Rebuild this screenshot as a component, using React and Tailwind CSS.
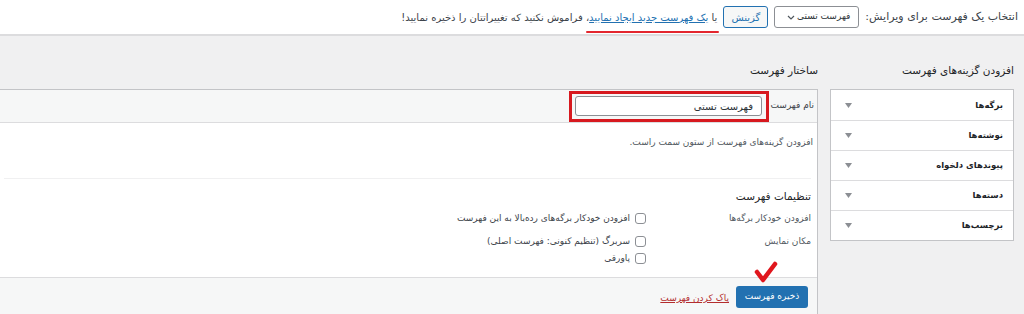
import React from 'react';

const items = ['برگه‌ها', 'نوشته‌ها', 'پیوندهای دلخواه', 'دسته‌ها', 'برچسب‌ها'];

const Arrow = () => (
  <svg width="7" height="5" viewBox="0 0 7 5" className="fill-[#8c8f94]">
    <path d="M0 0 L7 0 L3.5 5 Z" />
  </svg>
);

const Checkbox = () => (
  <span className="inline-block w-[11px] h-[11px] border border-[#8c8f94] rounded-[3px] bg-white shrink-0" />
);

const App = () => {
  return (
    <div
      dir="rtl"
      className="w-[1024px] h-[314px] overflow-hidden bg-[#f0f0f1] text-[#3c434a] text-[10px]"
      style={{ fontFamily: '"DejaVu Sans", "Liberation Sans", sans-serif' }}
    >
      {/* Top bar */}
      <div className="h-[36px] bg-white border-b-2 border-[#dcdcde] flex items-center pr-[6px] gap-[4px] whitespace-nowrap">
        <span className="text-[11px]">انتخاب یک فهرست برای ویرایش:</span>
        <div className="w-[85px] h-[22px] shrink-0 border border-[#8c8f94] rounded-[3px] flex items-center pr-[8px] pl-[12px] mr-[2px] overflow-hidden">
          <span className="flex-1 text-[9px] text-[#2c3338]">فهرست تستی</span>
          <svg className="shrink-0" width="8" height="5" viewBox="0 0 8 5" fill="none" stroke="#50575e" strokeWidth="1.2">
            <path d="M1 1 L4 4 L7 1" />
          </svg>
        </div>
        <button className="w-[45px] h-[22px] shrink-0 border border-[#2271b1] text-[#2271b1] bg-[#f6f7f7] rounded-[3px] mr-[2px]">
          گزینش
        </button>
        <span className="mr-[2px]">
          <span className="relative">
            یا{' '}
            <span className="text-[#2271b1] underline">یک فهرست جدید ایجاد نمایید</span>
            <span className="absolute left-[-3px] right-[-2px] top-[19px] h-[2px] bg-[#e3262e] rounded" />
          </span>
          ، فراموش نکنید که تغییراتتان را ذخیره نمایید!
        </span>
      </div>

      <div className="flex pr-[10px] pt-[26px] gap-[12px]">
        {/* Right column */}
        <div className="w-[184px] shrink-0">
          <h2 className="h-[16px] leading-[16px] text-[10.5px] text-[#1d2327] mb-[11px]">
            افزودن گزینه‌های فهرست
          </h2>
          <div className="bg-white border border-[#c3c4c7]">
            {items.map((item, i) => (
              <div
                key={i}
                className={`h-[30px] flex items-center justify-between pr-[10px] pl-[14px] ${
                  i > 0 ? 'border-t border-[#dcdcde]' : ''
                }`}
              >
                <span className="text-[8.5px] font-bold text-[#1d2327]">{item}</span>
                <Arrow />
              </div>
            ))}
          </div>
        </div>

        {/* Left column */}
        <div className="flex-1">
          <h2 className="h-[16px] leading-[16px] text-[10.5px] text-[#1d2327] mb-[11px]">
            ساختار فهرست
          </h2>
          <div className="border border-l-0 border-[#c3c4c7] bg-white text-[9px]">
            {/* Header */}
            <div className="h-[33px] bg-[#f6f7f7] border-b border-[#dcdcde] flex items-center pr-[3px] gap-[2px]">
              <span>نام فهرست</span>
              <div className="border-[3px] border-[#d7191f] w-[200px] h-[31px] flex items-center justify-center">
                <div className="w-[187px] h-[20px] border border-[#8c8f94] rounded-[3px] bg-white flex items-center pr-[8px] text-[10px] text-[#2c3338]">
                  فهرست تستی
                </div>
              </div>
            </div>

            {/* Body */}
            <div className="pt-[12px] pr-[4px] h-[55px] text-[#50575e]">
              <p className="leading-[14px]">افزودن گزینه‌های فهرست از ستون سمت راست.</p>
            </div>
            <div className="ml-[4px] mr-[6px] border-t border-[#f0f0f1] h-[99px] pt-[9px]">
              <h3 className="text-[10.5px] text-[#1d2327] leading-[16px] mb-[7px]">تنظیمات فهرست</h3>
              <div className="flex leading-[14px]">
                <div className="w-[165px] shrink-0 text-[#50575e]">افزودن خودکار برگه‌ها</div>
                <label className="flex items-center gap-[5px]">
                  <Checkbox />
                  <span>افزودن خودکار برگه‌های رده‌بالا به این فهرست</span>
                </label>
              </div>
              <div className="flex leading-[14px] mt-[9px]">
                <div className="w-[165px] shrink-0 text-[#50575e]">مکان نمایش</div>
                <div className="flex flex-col gap-[3px]">
                  <label className="flex items-center gap-[5px]">
                    <Checkbox />
                    <span>سربرگ (تنظیم کنونی: فهرست اصلی)</span>
                  </label>
                  <label className="flex items-center gap-[5px]">
                    <Checkbox />
                    <span>پاورقی</span>
                  </label>
                </div>
              </div>
            </div>

            {/* Footer */}
            <div className="h-[40px] bg-[#f6f7f7] border-t border-[#dcdcde] flex items-start pt-[8px] pr-[9px] gap-[7px]">
              <div className="relative">
                <button className="w-[72px] h-[22px] bg-[#2271b1] text-white rounded-[3px] text-[9px]">
                  ذخیره فهرست
                </button>
                <svg
                  className="absolute right-[30px] top-[-25px]"
                  width="24"
                  height="23"
                  viewBox="0 0 24 23"
                  fill="none"
                  stroke="#e0161d"
                  strokeWidth="4.5"
                  strokeLinecap="round"
                  strokeLinejoin="round"
                >
                  <path d="M3 11 L9 19 L21 3" />
                </svg>
              </div>
              <span className="text-[#b32d2e] underline text-[9px] mt-[6px]">پاک کردن فهرست</span>
            </div>
          </div>
        </div>
      </div>
    </div>
  );
};

export default App;
